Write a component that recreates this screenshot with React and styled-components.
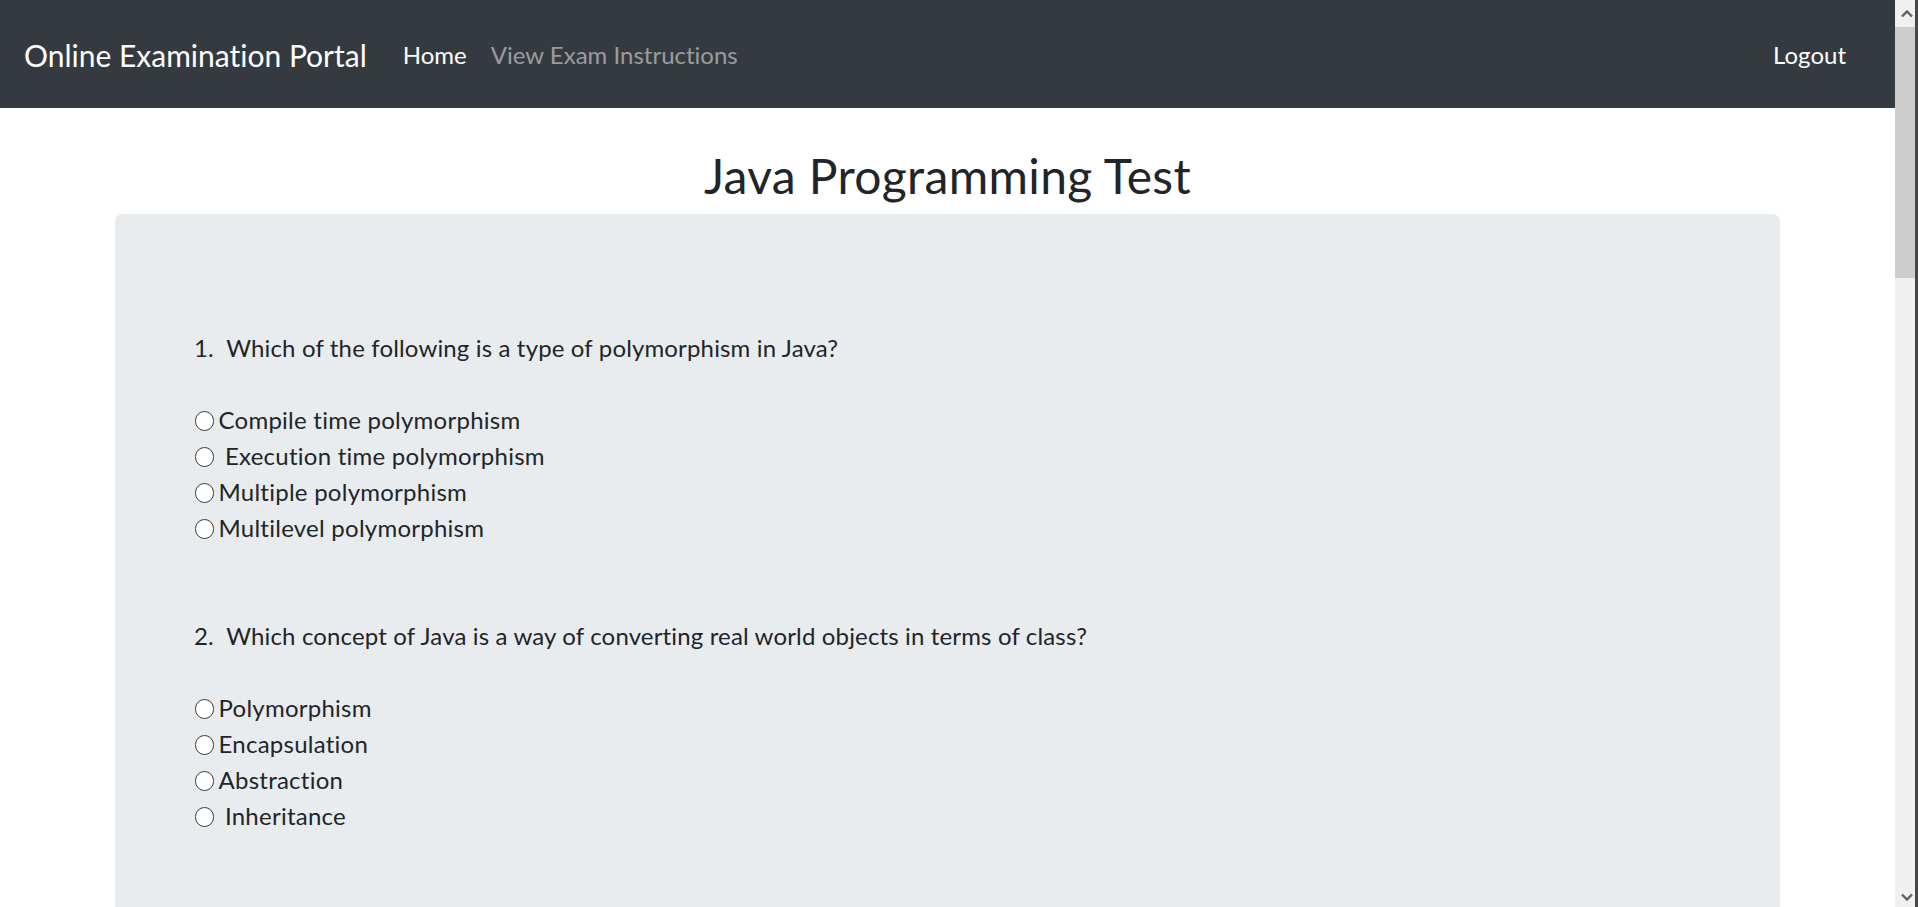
import React from "react";
import styled, { createGlobalStyle } from "styled-components";

const GlobalStyle = createGlobalStyle`
  html, body {
    margin: 0;
    height: 100%;
    overflow: hidden;
  }
  body {
    font-family: Lato, "Open Sans", sans-serif;
    font-variant-ligatures: none;
    color: #212529;
    background: #474747;
  }
  #root { height: 100%; }
  *, *::before, *::after { box-sizing: border-box; }
`;

/* Browser window: page area, classic scrollbar, window edge */
const Frame = styled.div`
  display: flex;
  height: 100vh;
  border-right: 3px solid #474747;
`;

const Page = styled.div`
  flex: 1;
  min-width: 0;
  overflow: hidden;
  background: #fff;
`;

const ScrollBar = styled.div`
  width: 20px;
  display: flex;
  flex-direction: column;
  background: #f0f0f0;
`;

const ScrollButton = styled.div`
  height: 27px;
  display: flex;
  align-items: center;
  justify-content: center;
  padding-left: 3px;
  padding-top: ${(p) => (p.$down ? "6px" : "0")};
`;

const ScrollTrack = styled.div`
  flex: 1;
`;

const ScrollThumb = styled.div`
  height: 251px;
  background: #cdcdcd;
`;

const Chevron = ({ down }) => (
  <svg width="12" height="8" viewBox="0 0 12 8" aria-hidden="true">
    <path
      d={down ? "M1 1.5 L6 6.5 L11 1.5" : "M1 6.5 L6 1.5 L11 6.5"}
      fill="none"
      stroke="#606060"
      strokeWidth="2.4"
    />
  </svg>
);

const Navbar = styled.nav`
  display: flex;
  align-items: center;
  height: 108px;
  padding: 2px 24px 0;
  background: #343a40;
`;

const Brand = styled.a`
  font-size: 30px;
  line-height: 45px;
  color: #fff;
  margin-right: 24px;
  text-decoration: none;
  white-space: nowrap;
`;

const NavList = styled.ul`
  display: flex;
  list-style: none;
  margin: 0;
  padding: 0;
  margin-left: ${(p) => (p.$end ? "auto" : "0")};
  margin-right: ${(p) => (p.$end ? "13px" : "0")};
`;

const NavLink = styled.a`
  display: block;
  padding: 12px;
  font-size: 24px;
  line-height: 36px;
  color: ${(p) => (p.$muted ? "rgba(255, 255, 255, 0.5)" : "#fff")};
  text-decoration: none;
  white-space: nowrap;
`;

const Container = styled.main`
  max-width: 1710px;
  margin: 0 auto;
  padding: 0 22.5px;
`;

const Title = styled.h2`
  margin: 39px 0 9.6px;
  font-size: 48px;
  font-weight: 400;
  line-height: 57.6px;
  letter-spacing: 0.35px;
  text-align: center;
  color: #212529;
`;

const Card = styled.section`
  background: #e9ecef;
  border-radius: 7.2px;
  padding: 96px 48px;
  margin-bottom: 48px;
  min-height: 760px;
`;

const QuizForm = styled.form`
  padding: 20px 0 0 24px;
`;

const QuestionBlock = styled.div`
  margin-bottom: 72px;
  &:last-child {
    margin-bottom: 0;
  }
`;

const QuestionText = styled.p`
  margin: 0 0 36px;
  padding-left: 7px;
  font-size: 24px;
  line-height: 36px;
  letter-spacing: 0.15px;
  white-space: pre-wrap;
`;

const OptionLabel = styled.label`
  display: block;
  font-size: 24px;
  line-height: 36px;
  letter-spacing: 0.25px;
  white-space: pre-wrap;
`;

const Radio = styled.input.attrs({ type: "radio" })`
  appearance: none;
  -webkit-appearance: none;
  display: inline-block;
  width: 19.5px;
  height: 19.5px;
  margin: 4.5px 4.5px 0 7.5px;
  border: 1.5px solid #3b3b3b;
  border-radius: 50%;
  background: #fff;
  vertical-align: -1.5px;
`;

const questions = [
  {
    q: "Which of the following is a type of polymorphism in Java?",
    o: [
      "Compile time polymorphism",
      " Execution time polymorphism",
      "Multiple polymorphism",
      "Multilevel polymorphism",
    ],
  },
  {
    q: "Which concept of Java is a way of converting real world objects in terms of class?",
    o: ["Polymorphism", "Encapsulation", "Abstraction", " Inheritance"],
  },
];

export default function App() {
  return (
    <>
      <GlobalStyle />
      <Frame>
        <Page>
          <Navbar>
            <Brand href="#">Online Examination Portal</Brand>
            <NavList>
              <li>
                <NavLink href="#">Home</NavLink>
              </li>
              <li>
                <NavLink href="#" $muted>
                  View Exam Instructions
                </NavLink>
              </li>
            </NavList>
            <NavList $end>
              <li>
                <NavLink href="#">Logout</NavLink>
              </li>
            </NavList>
          </Navbar>
          <Container>
            <Title>Java Programming Test</Title>
            <Card>
              <QuizForm onSubmit={(e) => e.preventDefault()}>
                {questions.map((item, i) => (
                  <QuestionBlock key={i}>
                    <QuestionText>{`${i + 1}.\u00a0 ${item.q}`}</QuestionText>
                    {item.o.map((opt, j) => (
                      <OptionLabel key={j}>
                        <Radio name={`q${i + 1}`} value={opt.trim()} />
                        {opt}
                      </OptionLabel>
                    ))}
                  </QuestionBlock>
                ))}
              </QuizForm>
            </Card>
          </Container>
        </Page>
        <ScrollBar>
          <ScrollButton>
            <Chevron />
          </ScrollButton>
          <ScrollTrack>
            <ScrollThumb />
          </ScrollTrack>
          <ScrollButton $down>
            <Chevron down />
          </ScrollButton>
        </ScrollBar>
      </Frame>
    </>
  );
}
